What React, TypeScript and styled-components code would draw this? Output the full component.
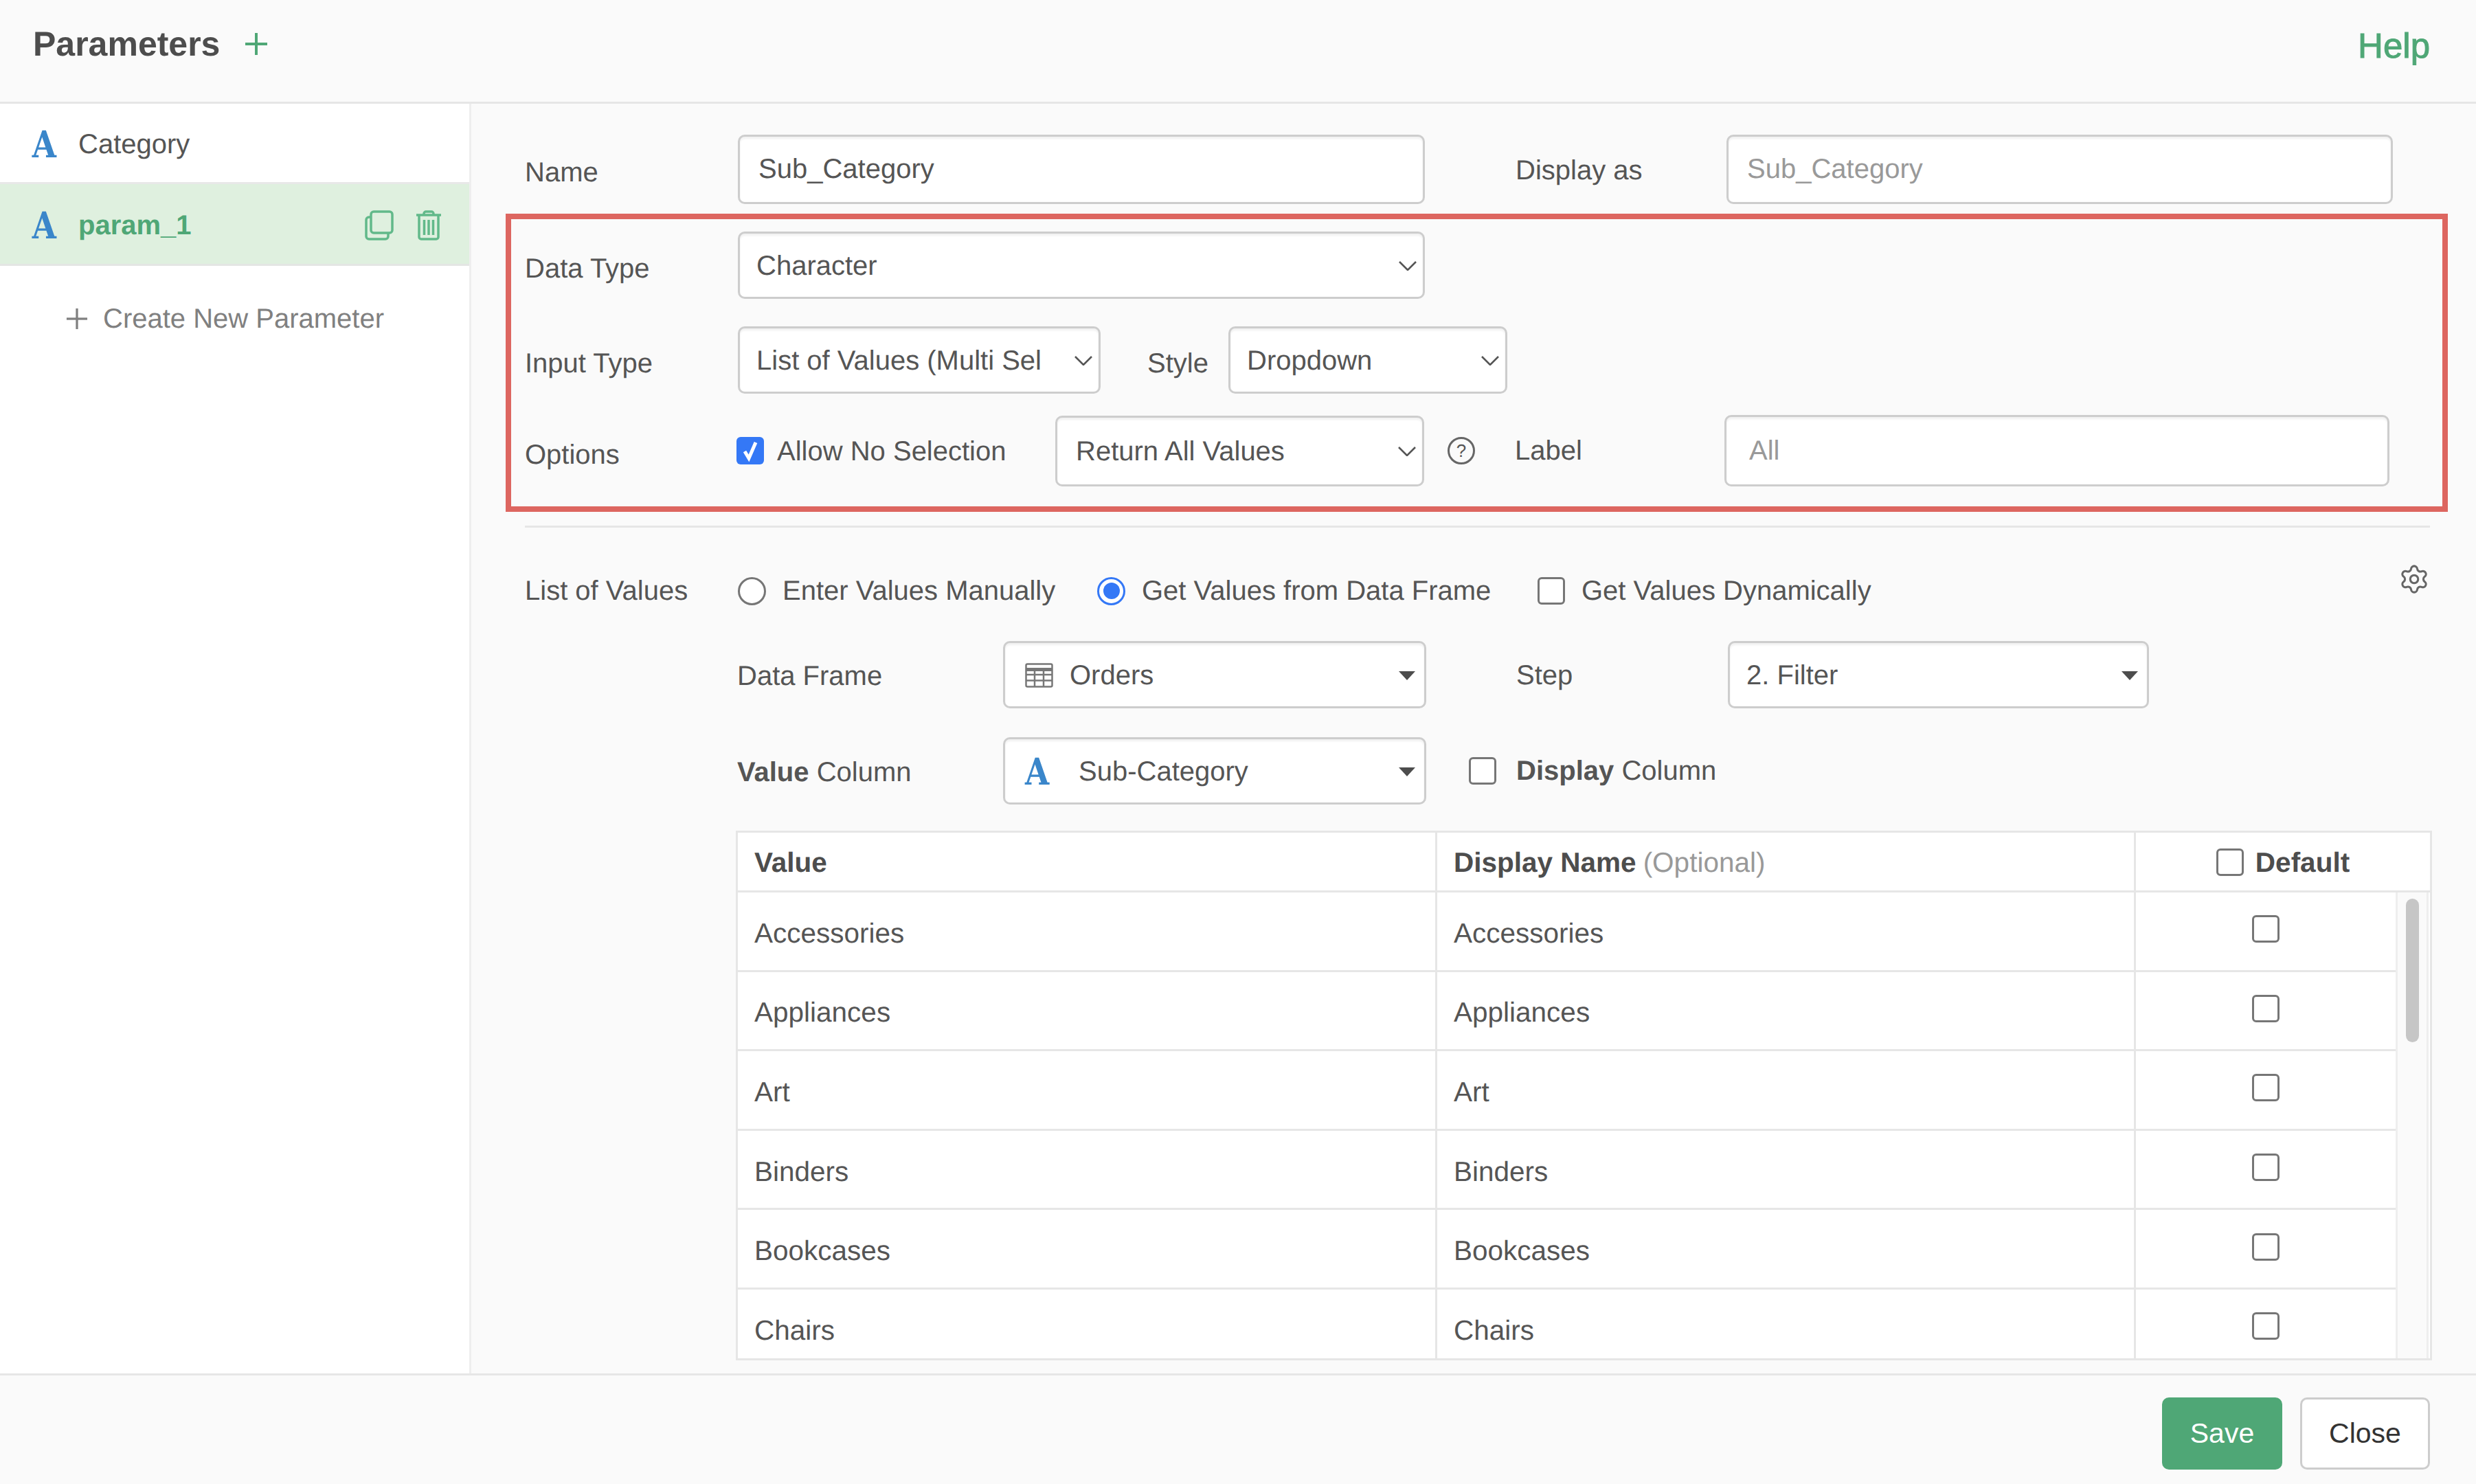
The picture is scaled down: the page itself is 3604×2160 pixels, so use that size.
import styled, { createGlobalStyle } from "styled-components";
import { Settings } from "lucide-react";

const GREEN = "#4fa776";
const TEXT = "#555";
const LINE = "#e6e6e6";

const GlobalStyle = createGlobalStyle`
  * { box-sizing: border-box; }
  html, body { margin: 0; padding: 0; }
  body {
    background: #fafafa;
    font-family: "Liberation Sans", Arial, sans-serif;
    font-size: 40px;
    color: ${TEXT};
    text-rendering: geometricPrecision;
  }
`;

const S = {
  Page: styled.div`
    display: flex;
    flex-direction: column;
    width: 3604px;
    height: 2160px;
    overflow: hidden;
    background: #fafafa;
  `,
  Header: styled.header`
    display: flex;
    align-items: center;
    flex: none;
    height: 151px;
    padding: 0 67px 20px 48px;
    border-bottom: 3px solid ${LINE};
  `,
  Title: styled.h1`
    margin: 0;
    font-size: 50px;
    font-weight: 700;
    color: #4d4d4d;
  `,
  AddIcon: styled.svg`
    width: 34px;
    height: 34px;
    margin-left: 36px;
    stroke: ${GREEN};
    stroke-width: 4;
  `,
  Help: styled.a`
    margin-left: auto;
    margin-top: 4px;
    font-size: 51px;
    color: ${GREEN};
    -webkit-text-stroke: 1px ${GREEN};
  `,
  Middle: styled.div`
    display: flex;
    flex: none;
    height: 1851px;
    border-bottom: 3px solid ${LINE};
  `,
  Sidebar: styled.aside`
    flex: none;
    width: 686px;
    background: #fff;
    border-right: 3px solid #eeeeee;
  `,
  ParamRow: styled.div<{ $active?: boolean }>`
    display: flex;
    align-items: center;
    height: ${(p) => (p.$active ? 119 : 117)}px;
    padding: 4px 38px 0 46px;
    background: ${(p) => (p.$active ? "#dff0df" : "#fff")};
    border-bottom: 3px solid ${(p) => (p.$active ? "#e3e6e3" : "#e8e8e8")};
    color: ${(p) => (p.$active ? GREEN : TEXT)};
    font-weight: ${(p) => (p.$active ? 700 : 400)};
  `,
  TypeA: styled.span`
    flex: none;
    width: 40px;
    padding-left: 1px;
    font-family: "DejaVu Serif", serif;
    font-size: 54px;
    font-weight: 700;
    line-height: 1;
    color: #3a86ca;
    transform: scaleX(0.84);
    transform-origin: left center;
  `,
  ParamName: styled.span`
    margin-left: 28px;
    margin-right: auto;
  `,
  RowIcon: styled.svg<{ $gap?: number }>`
    flex: none;
    width: 42px;
    height: 44px;
    margin-left: ${(p) => p.$gap ?? 0}px;
    fill: none;
    stroke: #62b98a;
    stroke-width: 3.5;
  `,
  CreateNew: styled.div`
    display: flex;
    align-items: center;
    gap: 22px;
    height: 154px;
    padding-left: 96px;
    color: #808080;
  `,
  PlusSmall: styled.svg`
    flex: none;
    width: 32px;
    height: 32px;
    stroke: #808080;
    stroke-width: 3.5;
  `,
  Main: styled.main`
    flex: 1;
    min-width: 0;
    padding: 45px 67px 0 78px;
  `,
  Row: styled.div<{ $top?: number; $indent?: number }>`
    display: flex;
    align-items: center;
    margin-top: ${(p) => p.$top ?? 0}px;
    padding-left: ${(p) => p.$indent ?? 0}px;
  `,
  Label: styled.label<{ $w: number; $left?: number; $shift?: number }>`
    flex: none;
    width: ${(p) => p.$w}px;
    margin-left: ${(p) => p.$left ?? 0}px;
    padding-top: ${(p) => p.$shift ?? 0}px;
  `,
  TextInput: styled.div<{ $w: number; $h?: number; $pad?: number; $placeholder?: boolean }>`
    display: flex;
    align-items: center;
    flex: none;
    width: ${(p) => p.$w}px;
    height: ${(p) => p.$h ?? 101}px;
    padding-left: ${(p) => p.$pad ?? 27}px;
    background: #fff;
    border: 3px solid #cdcdcd;
    border-radius: 10px;
    box-shadow: inset 0 3px 3px rgba(0, 0, 0, 0.06);
    color: ${(p) => (p.$placeholder ? "#999" : TEXT)};
  `,
  Select: styled.div<{ $w: number; $h?: number; $left?: number; $pad?: number }>`
    display: flex;
    align-items: center;
    flex: none;
    width: ${(p) => p.$w}px;
    height: ${(p) => p.$h ?? 98}px;
    margin-left: ${(p) => p.$left ?? 0}px;
    padding: 2px 9px 0 ${(p) => p.$pad ?? 24}px;
    background: #fff;
    border: 3px solid #cdcdcd;
    border-radius: 10px;
    box-shadow: inset 0 3px 3px rgba(0, 0, 0, 0.06);
    white-space: nowrap;
  `,
  SelectText: styled.span`
    flex: 1;
    min-width: 0;
  `,
  Chevron: styled.svg`
    flex: none;
    width: 26px;
    height: 14px;
    fill: none;
    stroke: #555;
    stroke-width: 2.6;
  `,
  Caret: styled.span`
    flex: none;
    width: 0;
    height: 0;
    margin-right: 4px;
    border-left: 12px solid transparent;
    border-right: 12px solid transparent;
    border-top: 13px solid #4d4d4d;
  `,
  Checkbox: styled.span<{ $checked?: boolean; $left?: number }>`
    display: inline-flex;
    align-items: center;
    justify-content: center;
    flex: none;
    width: 40px;
    height: 40px;
    margin-left: ${(p) => p.$left ?? 0}px;
    background: ${(p) => (p.$checked ? "#3478f6" : "#fff")};
    border: ${(p) => (p.$checked ? "none" : "3px solid #767676")};
    border-radius: 6px;
  `,
  Radio: styled.span<{ $checked?: boolean }>`
    display: inline-flex;
    align-items: center;
    justify-content: center;
    flex: none;
    width: 41px;
    height: 41px;
    background: #fff;
    border: 3px solid ${(p) => (p.$checked ? "#3478f6" : "#767676")};
    border-radius: 50%;
  `,
  RadioDot: styled.span`
    width: 24px;
    height: 24px;
    background: #3478f6;
    border-radius: 50%;
  `,
  Option: styled.label<{ $w?: number }>`
    display: flex;
    align-items: center;
    flex: none;
    gap: 24px;
    width: ${(p) => (p.$w ? `${p.$w}px` : "auto")};
  `,
  HelpCircle: styled.span`
    display: inline-flex;
    align-items: center;
    justify-content: center;
    flex: none;
    width: 40px;
    height: 40px;
    margin-left: 34px;
    border: 3px solid #666;
    border-radius: 50%;
    font-size: 26px;
    color: #555;
  `,
  Highlight: styled.section`
    margin: 14px -26px 0 -28px;
    padding: 18px 20px 29px;
    border: 8px solid #dd6660;
  `,
  Divider: styled.hr`
    height: 3px;
    margin: 20px 0 0;
    background: ${LINE};
    border: none;
  `,
  Gear: styled(Settings)`
    flex: none;
    width: 46px;
    height: 46px;
    margin-left: auto;
    transform: translateY(-17px);
    color: #666;
    stroke-width: 1.6;
  `,
  TableIcon: styled.svg`
    flex: none;
    width: 41px;
    height: 36px;
    margin-left: 5px;
    margin-right: 24px;
    fill: none;
    stroke: #777;
    stroke-width: 2.5;
  `,
  ColumnA: styled.span`
    flex: none;
    width: 40px;
    margin-left: 5px;
    margin-right: 38px;
    font-family: "DejaVu Serif", serif;
    font-size: 54px;
    font-weight: 700;
    line-height: 1;
    color: #3a86ca;
    transform: scaleX(0.84);
    transform-origin: left center;
  `,
  Strong: styled.b`
    font-weight: 700;
  `,
  Table: styled.div`
    height: 771px;
    margin: 38px -3px 0 307px;
    background: #fff;
    border: 3px solid ${LINE};
    font-size: 40.5px;
    overflow: hidden;
  `,
  HeaderRow: styled.div`
    display: grid;
    grid-template-columns: 1015px 1017px 1fr;
    height: 87px;
    border-bottom: 3px solid ${LINE};
  `,
  HeadCell: styled.div<{ $center?: boolean }>`
    display: flex;
    align-items: center;
    justify-content: ${(p) => (p.$center ? "center" : "flex-start")};
    gap: 17px;
    padding-left: ${(p) => (p.$center ? 0 : 24)}px;
    padding-top: 2px;
    font-weight: 700;
    color: #4d4d4d;
    & + & {
      border-left: 3px solid ${LINE};
    }
  `,
  Muted: styled.span`
    margin-left: 10px;
    font-weight: 400;
    color: #999;
  `,
  TableBody: styled.div`
    display: flex;
  `,
  Rows: styled.div`
    flex: none;
    width: 2413px;
  `,
  ValueRow: styled.div`
    display: grid;
    grid-template-columns: 1015px 1017px 1fr;
    height: 115.6px;
    border-bottom: 3px solid ${LINE};
  `,
  Cell: styled.div`
    display: flex;
    align-items: center;
    padding: 6px 0 0 24px;
    & + & {
      border-left: 3px solid ${LINE};
    }
  `,
  CheckCell: styled.div`
    display: flex;
    align-items: center;
    justify-content: center;
    padding-bottom: 6px;
    border-left: 3px solid ${LINE};
  `,
  ScrollTrack: styled.div`
    flex: 1;
    padding: 9px 11px 0 12px;
    background: #fafafa;
    border-left: 3px solid #eeeeee;
    border-right: 3px solid #eeeeee;
    margin-right: 2px;
  `,
  ScrollThumb: styled.div`
    height: 209px;
    background: #c6c6c6;
    border-radius: 12px;
  `,
  Footer: styled.footer`
    display: flex;
    justify-content: flex-end;
    gap: 26px;
    padding: 32px 67px 0 0;
  `,
  Save: styled.button`
    width: 175px;
    height: 105px;
    padding: 0;
    background: ${GREEN};
    border: none;
    border-radius: 10px;
    color: #fff;
    font: inherit;
    font-size: 41px;
  `,
  Close: styled.button`
    width: 189px;
    height: 105px;
    padding: 0;
    background: #fff;
    border: 3px solid #cdcdcd;
    border-radius: 10px;
    color: #333;
    font: inherit;
    font-size: 41px;
  `,
};

const Plus = () => (
  <>
    <line x1="17" y1="1" x2="17" y2="33" />
    <line x1="1" y1="17" x2="33" y2="17" />
  </>
);

const CopyIcon = () => (
  <S.RowIcon viewBox="0 0 42 44">
    <rect x="9" y="2" width="31" height="31" rx="4" />
    <path d="M9 10H6a4 4 0 0 0-4 4v24a4 4 0 0 0 4 4h24a4 4 0 0 0 4-4v-5" />
  </S.RowIcon>
);

const TrashIcon = () => (
  <S.RowIcon viewBox="0 0 42 44" $gap={30}>
    <path d="M3 7h36M14 7V5a3 3 0 0 1 3-3h8a3 3 0 0 1 3 3v2" />
    <path d="M7 7v32a3 3 0 0 0 3 3h22a3 3 0 0 0 3-3V7" />
    <path d="M14.5 14v22M21 14v22M27.5 14v22" />
  </S.RowIcon>
);

const Chevron = () => (
  <S.Chevron viewBox="0 0 26 14">
    <path d="M1 1l12 12L25 1" />
  </S.Chevron>
);

const Check = () => (
  <svg width="28" height="32" viewBox="0 0 28 32">
    <path d="M6 17l6 10L22 4" fill="none" stroke="#fff" strokeWidth="5" />
  </svg>
);

const values = ["Accessories", "Appliances", "Art", "Binders", "Bookcases", "Chairs"];

const App = () => {
  return (
    <S.Page>
      <GlobalStyle />
      <S.Header>
        <S.Title>Parameters</S.Title>
        <S.AddIcon viewBox="0 0 34 34">
          <Plus />
        </S.AddIcon>
        <S.Help>Help</S.Help>
      </S.Header>

      <S.Middle>
        <S.Sidebar>
          <S.ParamRow>
            <S.TypeA>A</S.TypeA>
            <S.ParamName>Category</S.ParamName>
          </S.ParamRow>
          <S.ParamRow $active>
            <S.TypeA>A</S.TypeA>
            <S.ParamName>param_1</S.ParamName>
            <CopyIcon />
            <TrashIcon />
          </S.ParamRow>
          <S.CreateNew>
            <S.PlusSmall viewBox="0 0 34 34">
              <Plus />
            </S.PlusSmall>
            Create New Parameter
          </S.CreateNew>
        </S.Sidebar>

        <S.Main>
          <S.Row>
            <S.Label $w={310} $shift={10}>Name</S.Label>
            <S.TextInput $w={1000}>Sub_Category</S.TextInput>
            <S.Label $w={307} $left={132} $shift={4}>Display as</S.Label>
            <S.TextInput $w={970} $placeholder>Sub_Category</S.TextInput>
          </S.Row>

          <S.Highlight>
            <S.Row>
              <S.Label $w={310} $shift={10}>Data Type</S.Label>
              <S.Select $w={1000}>
                <S.SelectText>Character</S.SelectText>
                <Chevron />
              </S.Select>
            </S.Row>
            <S.Row $top={40}>
              <S.Label $w={310} $shift={10}>Input Type</S.Label>
              <S.Select $w={528}>
                <S.SelectText>List of Values (Multi Sel</S.SelectText>
                <Chevron />
              </S.Select>
              <S.Label $w={118} $left={68} $shift={10}>Style</S.Label>
              <S.Select $w={406}>
                <S.SelectText>Dropdown</S.SelectText>
                <Chevron />
              </S.Select>
            </S.Row>
            <S.Row $top={31}>
              <S.Label $w={308} $shift={12}>Options</S.Label>
              <S.Checkbox $checked>
                <Check />
              </S.Checkbox>
              <S.Label $w={405} $left={19} $shift={3}>Allow No Selection</S.Label>
              <S.Select $w={537} $h={103} $pad={27}>
                <S.SelectText>Return All Values</S.SelectText>
                <Chevron />
              </S.Select>
              <S.HelpCircle>?</S.HelpCircle>
              <S.Label $w={305} $left={58}>Label</S.Label>
              <S.TextInput $w={968} $h={104} $pad={33} $placeholder>All</S.TextInput>
            </S.Row>
          </S.Highlight>

          <S.Divider />

          <S.Row $top={69}>
            <S.Label $w={310}>List of Values</S.Label>
            <S.Option $w={523}>
              <S.Radio />
              Enter Values Manually
            </S.Option>
            <S.Option $w={641}>
              <S.Radio $checked>
                <S.RadioDot />
              </S.Radio>
              Get Values from Data Frame
            </S.Option>
            <S.Option>
              <S.Checkbox />
              Get Values Dynamically
            </S.Option>
            <S.Gear />
          </S.Row>

          <S.Row $top={50} $indent={309}>
            <S.Label $w={387} $shift={5}>Data Frame</S.Label>
            <S.Select $w={616}>
              <S.TableIcon viewBox="0 0 41 36">
                <rect x="1.5" y="1.5" width="38" height="33" rx="2" />
                <path d="M1.5 9.5h38" strokeWidth="5" />
                <path d="M1.5 17h38M1.5 25.5h38M14 9v26M27 9v26" />
              </S.TableIcon>
              <S.SelectText>Orders</S.SelectText>
              <S.Caret />
            </S.Select>
            <S.Label $w={308} $left={131} $shift={3}>Step</S.Label>
            <S.Select $w={613}>
              <S.SelectText>2. Filter</S.SelectText>
              <S.Caret />
            </S.Select>
          </S.Row>

          <S.Row $top={42} $indent={309}>
            <S.Label $w={387} $shift={4}>
              <S.Strong>Value</S.Strong> Column
            </S.Label>
            <S.Select $w={616}>
              <S.ColumnA>A</S.ColumnA>
              <S.SelectText>Sub-Category</S.SelectText>
              <S.Caret />
            </S.Select>
            <S.Checkbox $left={62} />
            <S.Label $w={400} $left={29}>
              <S.Strong>Display</S.Strong> Column
            </S.Label>
          </S.Row>

          <S.Table>
            <S.HeaderRow>
              <S.HeadCell>Value</S.HeadCell>
              <S.HeadCell>
                <span>
                  Display Name<S.Muted>(Optional)</S.Muted>
                </span>
              </S.HeadCell>
              <S.HeadCell $center>
                <S.Checkbox />
                Default
              </S.HeadCell>
            </S.HeaderRow>
            <S.TableBody>
              <S.Rows>
                {values.map((v) => (
                  <S.ValueRow key={v}>
                    <S.Cell>{v}</S.Cell>
                    <S.Cell>{v}</S.Cell>
                    <S.CheckCell>
                      <S.Checkbox />
                    </S.CheckCell>
                  </S.ValueRow>
                ))}
              </S.Rows>
              <S.ScrollTrack>
                <S.ScrollThumb />
              </S.ScrollTrack>
            </S.TableBody>
          </S.Table>
        </S.Main>
      </S.Middle>

      <S.Footer>
        <S.Save>Save</S.Save>
        <S.Close>Close</S.Close>
      </S.Footer>
    </S.Page>
  );
};

export default App;
